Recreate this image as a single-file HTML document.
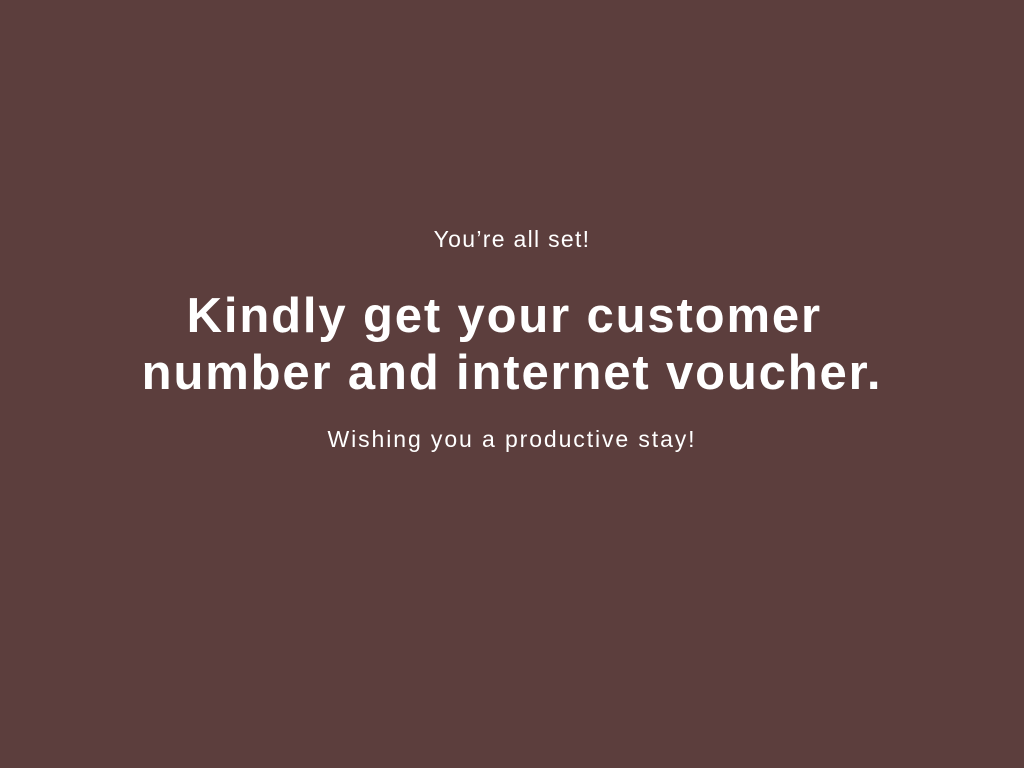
<!DOCTYPE html>
<html><head><meta charset="utf-8"><style>
html,body{margin:0;padding:0;width:1024px;height:768px;background:#5c3e3d;overflow:hidden}
.t{position:absolute;left:0;width:1024px;text-align:center;color:#fff;font-family:"Liberation Sans",sans-serif;white-space:nowrap}
.s{font-size:23px;line-height:26px;letter-spacing:1.5px}
.h{font-size:49px;font-weight:bold;line-height:57px;letter-spacing:1.85px}
</style></head><body>
<div class="t s" style="top:226px;letter-spacing:1.3px">You’re all set!</div>
<div class="t h" style="top:288px">Kindly get your customer&nbsp;</div>
<div class="t h" style="top:345px">number and internet voucher.</div>
<div class="t s" style="top:426px;letter-spacing:1.9px">Wishing you a productive stay!</div>
</body></html>
